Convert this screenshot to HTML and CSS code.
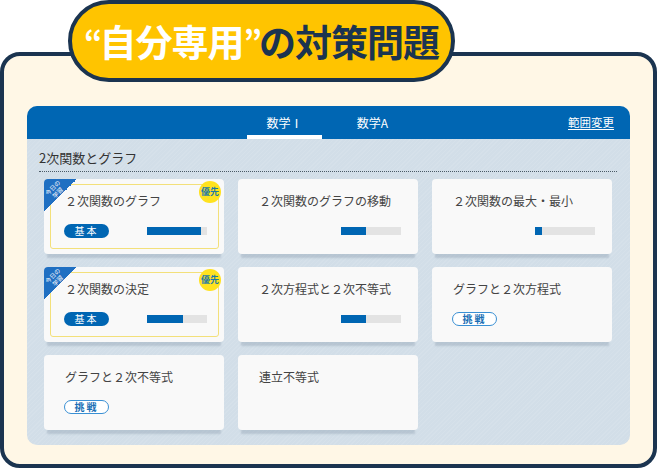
FILE: index.html
```html
<!DOCTYPE html>
<html lang="ja">
<head>
    <meta charset="UTF-8">
    <meta name="viewport" content="width=device-width, initial-scale=1.0">
    <title>自分専用の対策問題</title>
    <link rel="stylesheet" href="styles.css">
</head>
<body>

<div class="stage">
    <h1 class="title-pill"><span class="accent"><span class="quote">“</span>自分専用<span class="quote">”</span></span>の対策問題</h1>

    <div class="frame">
        <div class="panel">
            <div class="panel-header">
                <div class="tabs">
                    <div class="tab active">数学Ⅰ</div>
                    <div class="tab">数学A</div>
                </div>
                <a class="range-link" href="#">範囲変更</a>
            </div>

            <div class="panel-body">
                <h2 class="section-head">2次関数とグラフ</h2>

                <div class="cards">
                    <div class="card today">
                        <div class="today-mark"><span>今日の<br>学習</span></div>
                        <div class="priority">優先</div>
                        <p class="card-title">２次関数のグラフ</p>
                        <div class="card-foot">
                            <span class="badge basic">基本</span>
                            <span class="bar"><span class="bar-fill" style="width: 90%"></span></span>
                        </div>
                    </div>
                    <div class="card">
                        <p class="card-title">２次関数のグラフの移動</p>
                        <div class="card-foot">
                            <span class="bar"><span class="bar-fill" style="width: 41%"></span></span>
                        </div>
                    </div>
                    <div class="card">
                        <p class="card-title">２次関数の最大・最小</p>
                        <div class="card-foot">
                            <span class="bar"><span class="bar-fill" style="width: 11%"></span></span>
                        </div>
                    </div>

                    <div class="card today">
                        <div class="today-mark"><span>今日の<br>学習</span></div>
                        <div class="priority">優先</div>
                        <p class="card-title">２次関数の決定</p>
                        <div class="card-foot">
                            <span class="badge basic">基本</span>
                            <span class="bar"><span class="bar-fill" style="width: 60%"></span></span>
                        </div>
                    </div>
                    <div class="card">
                        <p class="card-title">２次方程式と２次不等式</p>
                        <div class="card-foot">
                            <span class="bar"><span class="bar-fill" style="width: 41%"></span></span>
                        </div>
                    </div>
                    <div class="card">
                        <p class="card-title">グラフと２次方程式</p>
                        <div class="card-foot">
                            <span class="badge challenge">挑戦</span>
                        </div>
                    </div>

                    <div class="card">
                        <p class="card-title">グラフと２次不等式</p>
                        <div class="card-foot">
                            <span class="badge challenge">挑戦</span>
                        </div>
                    </div>
                    <div class="card">
                        <p class="card-title">連立不等式</p>
                    </div>
                </div>
            </div>
        </div>
    </div>
</div>

</body>
</html>
```

FILE: styles.css
```css
body {
    margin: 0;
    font-family: "Noto Sans CJK JP", "Noto Sans", sans-serif;
    background-color: #fff;
}

.stage {
    position: relative;
    width: 657px;
    height: 468px;
    overflow: hidden;
}

.title-pill {
    position: absolute;
    left: 68px;
    top: 0;
    z-index: 2;
    margin: 0;
    width: 387px;
    height: 82px;
    box-sizing: border-box;
    border: 4px solid #1b3450;
    border-radius: 41px;
    background-color: #ffc400;
    color: #1b3450;
    font-size: 37px;
    font-weight: 700;
    letter-spacing: -1px;
    line-height: 74px;
    text-align: center;
}

.title-pill .accent {
    color: #fff;
}

.title-pill .quote {
    font-size: 32px;
    letter-spacing: -3px;
}

.frame {
    margin-top: 52px;
    height: 416px;
    box-sizing: border-box;
    border: 4px solid #1b3450;
    border-radius: 20px;
    background-color: #fff7e6;
    padding: 50px 23px 0 23px;
}

.panel {
    height: 339px;
    border-radius: 10px;
    overflow: hidden;
    background-color: #d2dee8;
    background-image: repeating-linear-gradient(135deg, rgba(255, 255, 255, 0.08) 0 1px, transparent 1px 3px);
}

.panel-header {
    height: 33px;
    background-color: #0066b3;
    display: flex;
    align-items: stretch;
    justify-content: flex-end;
    position: relative;
    padding-right: 16px;
}

.tabs {
    position: absolute;
    left: 220px;
    top: 0;
    bottom: 0;
    display: flex;
    gap: 13px;
}

.tab {
    width: 75px;
    color: #fff;
    font-size: 12px;
    line-height: 33px;
    text-align: center;
    box-sizing: border-box;
}

.tab.active {
    border-bottom: 4px solid #fff;
}

.range-link {
    color: #fff;
    font-size: 11.5px;
    line-height: 33px;
    text-decoration: underline;
    text-underline-offset: 2px;
}

.panel-body {
    padding: 10px 13px 0 12px;
}

.section-head {
    margin: 0 0 7px 0;
    padding-bottom: 4px;
    border-bottom: 1px dotted #4a5a66;
    color: #333;
    font-size: 13px;
    font-weight: 400;
    line-height: 18px;
}

.cards {
    display: grid;
    grid-template-columns: repeat(3, 180px);
    grid-auto-rows: 75px;
    column-gap: 14px;
    row-gap: 13px;
    padding-left: 5px;
}

.card {
    position: relative;
    background-color: #f9f9f9;
    border-radius: 4px;
    padding: 14px 17px 0 20px;
    box-shadow: 0 7px 2px -3px rgba(120, 140, 160, 0.3);
}

.card.today::before {
    content: "";
    position: absolute;
    left: 6px;
    top: 5px;
    right: 5px;
    bottom: 5px;
    border: 1px solid #f3e07a;
    border-radius: 3px;
}

.today-mark {
    position: absolute;
    left: 0;
    top: 0;
    width: 33px;
    height: 33px;
    background: linear-gradient(135deg, #1f6fc2 50%, transparent 50%);
    border-top-left-radius: 4px;
    z-index: 1;
}

.today-mark span {
    position: absolute;
    left: 0;
    top: 4px;
    width: 22px;
    color: #fff;
    font-size: 6px;
    line-height: 7px;
    text-align: center;
    transform: rotate(-45deg);
}

.priority {
    position: absolute;
    right: 3px;
    top: 2px;
    width: 22px;
    height: 22px;
    border-radius: 50%;
    background-color: #ffe21f;
    color: #1a78a8;
    font-size: 9px;
    font-weight: 700;
    line-height: 22px;
    text-align: center;
    z-index: 1;
}

.card-title {
    position: relative;
    margin: 0 0 15px 1px;
    color: #444;
    font-size: 12px;
    line-height: 16px;
}

.card-foot {
    position: relative;
    display: flex;
    align-items: center;
    height: 14px;
}

.badge {
    width: 45px;
    height: 14px;
    box-sizing: border-box;
    border-radius: 7px;
    font-size: 10px;
    line-height: 14px;
    letter-spacing: 2px;
    text-align: center;
}

.badge.basic {
    background-color: #0066b3;
    color: #fff;
}

.badge.challenge {
    background-color: #fff;
    border: 1.5px solid #3a90d4;
    color: #1a6fb5;
    font-weight: 700;
    line-height: 11px;
}

.bar {
    margin-left: auto;
    width: 60px;
    height: 8px;
    background-color: #e3e3e3;
}

.bar-fill {
    display: block;
    height: 100%;
    background-color: #0066b3;
}
```
